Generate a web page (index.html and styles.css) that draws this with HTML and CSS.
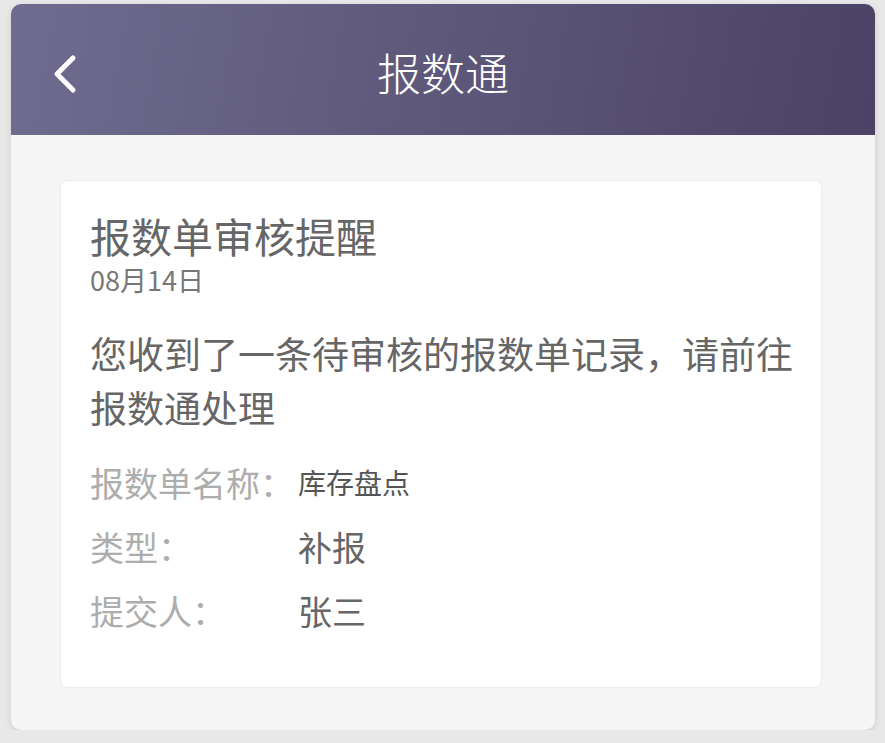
FILE: index.html
```html
<!DOCTYPE html>
<html lang="zh-CN">
<head>
<meta charset="UTF-8">
<meta name="viewport" content="width=device-width, initial-scale=1.0">
<title>报数通</title>
<link rel="stylesheet" href="styles.css">
</head>
<body>
<div class="app">
  <div class="header">
    <a class="back" href="#">
      <svg width="26" height="40" viewBox="0 0 26 40">
        <polyline points="21,4 5,20 21,36" fill="none" stroke="#fff" stroke-width="5" stroke-linecap="round" stroke-linejoin="round"/>
      </svg>
    </a>
    <div class="header-title">报数通</div>
  </div>

  <div class="content">
    <div class="card">
      <div class="card-title">报数单审核提醒</div>
      <div class="card-date">08月14日</div>
      <div class="card-msg">您收到了一条待审核的报数单记录，请前往报数通处理</div>

      <div class="info-row">
        <div class="info-label">报数单名称：</div>
        <div class="info-value small">库存盘点</div>
      </div>
      <div class="info-row">
        <div class="info-label">类型：</div>
        <div class="info-value">补报</div>
      </div>
      <div class="info-row">
        <div class="info-label">提交人：</div>
        <div class="info-value">张三</div>
      </div>
    </div>
  </div>
</div>
</body>
</html>
```

FILE: styles.css
```css
* {
  margin: 0;
  padding: 0;
  box-sizing: border-box;
}

body {
  font-family: "Noto Sans CJK SC", "Noto Sans", sans-serif;
  background: #e8e8e8;
  padding: 4px 10px 0 11px;
}

.app {
  width: 864px;
  height: 726px;
  background: #f5f5f5;
  border-radius: 10px;
  overflow: hidden;
  box-shadow: 0 2px 6px rgba(0, 0, 0, 0.12);
}

.header {
  position: relative;
  height: 131px;
  display: flex;
  align-items: center;
  justify-content: center;
  background: linear-gradient(100deg, #6f6c8f 0%, #5f5a7c 45%, #4b4265 100%);
}

.back {
  position: absolute;
  left: 41px;
  top: 50px;
  display: block;
  width: 26px;
  height: 40px;
}

.header-title {
  color: #fff;
  font-size: 44px;
  font-weight: 300;
  line-height: 1;
  margin-top: 4px;
}

.content {
  padding: 45px 53px 0 49px;
}

.card {
  background: #fff;
  border: 1px solid #ececec;
  border-radius: 8px;
  height: 508px;
  padding: 30px 16px 0 29px;
}

.card-title {
  font-size: 41px;
  line-height: 48px;
  color: #666;
}

.card-date {
  font-size: 27px;
  line-height: 34px;
  margin-top: 4px;
  color: #777;
}

.card-msg {
  font-size: 37px;
  line-height: 54px;
  margin-top: 29px;
  color: #666;
}

.info-row {
  display: flex;
  align-items: center;
  height: 64px;
}

.card-msg + .info-row {
  margin-top: 16px;
}

.info-label {
  width: 208px;
  font-size: 34px;
  color: #adadad;
}

.info-value {
  font-size: 34px;
  color: #666;
}

.info-value.small {
  font-size: 28px;
  color: #555;
}
```
